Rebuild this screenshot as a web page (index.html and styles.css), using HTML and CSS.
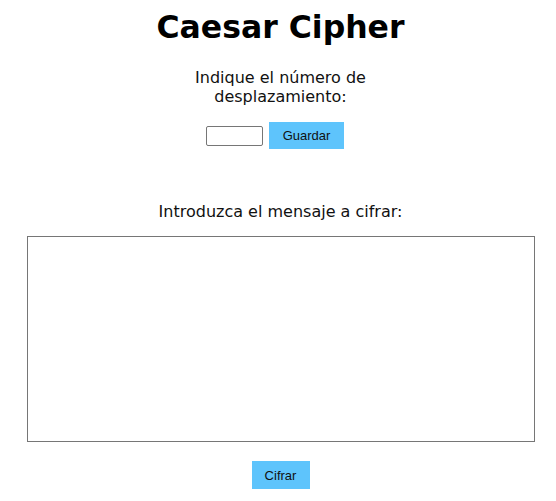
FILE: index.html
```html
<!DOCTYPE html>
<html lang="es">
<head>
<meta charset="utf-8">
<title>Caesar Cipher</title>
<link rel="stylesheet" href="styles.css">
</head>
<body>
<main class="page">
  <h1 class="title">Caesar Cipher</h1>
  <p class="label label-shift">Indique el número de desplazamiento:</p>
  <div class="shift-row">
    <input class="shift-input" type="text">
    <button class="btn btn-save" type="button">Guardar</button>
  </div>
  <p class="label label-msg">Introduzca el mensaje a cifrar:</p>
  <textarea class="message"></textarea>
  <button class="btn btn-encrypt" type="button">Cifrar</button>
</main>
</body>
</html>
```
FILE: styles.css
```css
html, body { margin: 0; padding: 0; background: #fff; }
body { font-family: "DejaVu Sans", Verdana, sans-serif; color: #111; }
.page {
  display: flex;
  flex-direction: column;
  align-items: center;
  padding-top: 8px;
  padding-left: 5px;
}
.title {
  margin: 0;
  font-size: 31.5px;
  font-weight: bold;
  line-height: 38px;
  color: #000;
}
.label {
  margin: 0;
  font-size: 16px;
  line-height: 19px;
  text-align: center;
}
.label-shift { margin-top: 22px; width: 200px; }
.shift-row {
  display: flex;
  align-items: center;
  gap: 6px;
  margin-top: 16px;
  margin-right: 11px;
}
.shift-input {
  width: 53px;
  height: 16px;
  padding: 1px;
  border: 1px solid #767676;
  border-radius: 2px;
  margin: 0;
}
.btn {
  border: none;
  background: #5ec4fc;
  font-family: "Liberation Sans", Arial, sans-serif;
  font-size: 13px;
  color: #111;
  padding: 0;
  margin: 0;
}
.btn-save { width: 75px; height: 27px; }
.label-msg { margin-top: 53px; }
.message {
  margin-top: 15px;
  width: 504px;
  height: 202px;
  border: 1px solid #767676;
  padding: 1px;
  resize: none;
}
.btn-encrypt { width: 58px; height: 28px; margin-top: 19px; }
```
